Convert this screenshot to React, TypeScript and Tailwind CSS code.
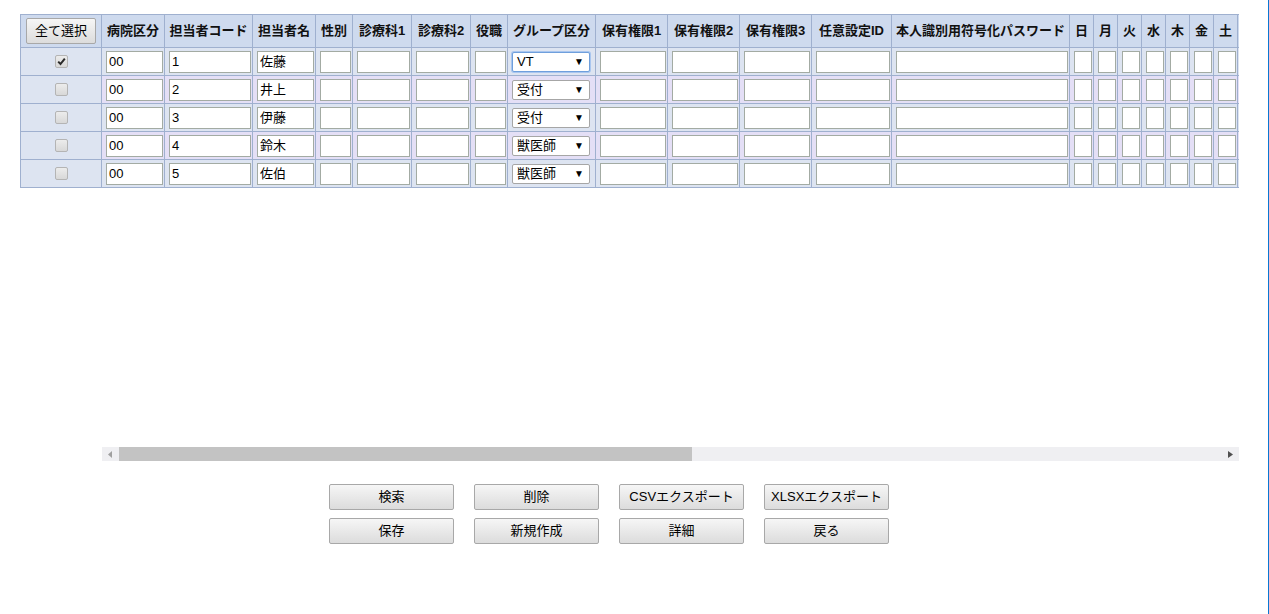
import React from "react";

type Col = { key: string; label: string; w: string; iw: string };

const fieldCols: Col[] = [
  { key: "hosp", label: "病院区分", w: "w-[63px]", iw: "w-[57px]" },
  { key: "code", label: "担当者コード", w: "w-[88px]", iw: "w-[82px]" },
  { key: "name", label: "担当者名", w: "w-[63px]", iw: "w-[57px]" },
  { key: "sex", label: "性別", w: "w-[37px]", iw: "w-[31px]" },
  { key: "d1", label: "診療科1", w: "w-[59px]", iw: "w-[53px]" },
  { key: "d2", label: "診療科2", w: "w-[59px]", iw: "w-[53px]" },
  { key: "role", label: "役職", w: "w-[37px]", iw: "w-[31px]" },
  { key: "group", label: "グループ区分", w: "w-[88px]", iw: "w-[78px]" },
  { key: "p1", label: "保有権限1", w: "w-[72px]", iw: "w-[66px]" },
  { key: "p2", label: "保有権限2", w: "w-[72px]", iw: "w-[66px]" },
  { key: "p3", label: "保有権限3", w: "w-[72px]", iw: "w-[66px]" },
  { key: "any", label: "任意設定ID", w: "w-[80px]", iw: "w-[74px]" },
  { key: "pw", label: "本人識別用符号化パスワード", w: "w-[178px]", iw: "w-[172px]" },
  { key: "sun", label: "日", w: "w-[24px]", iw: "w-[18px]" },
  { key: "mon", label: "月", w: "w-[24px]", iw: "w-[18px]" },
  { key: "tue", label: "火", w: "w-[24px]", iw: "w-[18px]" },
  { key: "wed", label: "水", w: "w-[24px]", iw: "w-[18px]" },
  { key: "thu", label: "木", w: "w-[24px]", iw: "w-[18px]" },
  { key: "fri", label: "金", w: "w-[24px]", iw: "w-[18px]" },
  { key: "sat", label: "土", w: "w-[24px]", iw: "w-[18px]" },
  { key: "x1", label: "", w: "w-[60px]", iw: "w-[54px]" },
  { key: "x2", label: "", w: "w-[60px]", iw: "w-[54px]" },
];

const rows = [
  { checked: true, code: "1", name: "佐藤", group: "VT", focus: true },
  { checked: false, code: "2", name: "井上", group: "受付" },
  { checked: false, code: "3", name: "伊藤", group: "受付" },
  { checked: false, code: "4", name: "鈴木", group: "獣医師" },
  { checked: false, code: "5", name: "佐伯", group: "獣医師" },
];

const font = "font-['Liberation_Sans','Noto_Sans_CJK_JP',sans-serif]";

function CheckBox({ checked }: { checked: boolean }) {
  return (
    <div className="mx-auto w-[13px] h-[13px] rounded-[2px] border border-[#b4b4b4] bg-linear-to-b from-[#ececec] to-[#d8d8d8] flex items-center justify-center">
      {checked && (
        <svg width="9" height="9" viewBox="0 0 9 9">
          <path d="M1.2 4.6 L3.5 7 L7.8 1.6" fill="none" stroke="#2a2a2a" strokeWidth="2" />
        </svg>
      )}
    </div>
  );
}

function Select({ value, focus }: { value: string; focus?: boolean }) {
  return (
    <div
      className={`relative w-[78px] h-[20px] bg-white rounded-[2px] border ${
        focus ? "border-[#6f9fdc] shadow-[0_0_0_1px_#a9c6ef]" : "border-[#a6a6a6]"
      } flex items-center pl-[4px] text-[13px] text-black`}
    >
      <span className="leading-none">{value}</span>
      <span className="absolute right-[5px] top-[4px] text-[10px] leading-none text-black">▼</span>
    </div>
  );
}

function Btn({ children }: { children: React.ReactNode }) {
  return (
    <button className="w-[125px] h-[26px] border border-[#a8a8a8] rounded-[2px] bg-linear-to-b from-[#f6f6f6] to-[#dcdcdc] text-[13px] text-black flex items-center justify-center">
      {children}
    </button>
  );
}

export default function App() {
  return (
    <div className={`w-[1269px] h-[614px] bg-white flex ${font} overflow-hidden`}>
      <div className="w-[1268px] h-full flex flex-col pt-[14px] pl-[20px]">
        <div className="w-[1219px] h-[433px] overflow-hidden">
          <table className="table-fixed border-separate border-spacing-0 border-l border-t border-[#9fb0cf] w-max">
            <colgroup>
              <col className="w-[81px]" />
              {fieldCols.map((c) => (
                <col key={c.key} className={c.w} />
              ))}
            </colgroup>
            <thead>
              <tr>
                <th className="h-[33px] p-0 border-r border-b border-[#9fb0cf] bg-[#cedaee] align-middle">
                  <button className="mx-auto w-[70px] h-[26px] border border-[#a8a8a8] rounded-[2px] bg-linear-to-b from-[#f6f6f6] to-[#dcdcdc] text-[13px] font-normal text-black flex items-center justify-center">
                    全て選択
                  </button>
                </th>
                {fieldCols.map((c) => (
                  <th
                    key={c.key}
                    className="h-[33px] p-0 border-r border-b border-[#9fb0cf] bg-[#cedaee] text-[13px] font-bold text-[#111] text-center whitespace-nowrap align-middle"
                  >
                    {c.label}
                  </th>
                ))}
              </tr>
            </thead>
            <tbody>
              {rows.map((r, i) => {
                const bg = i % 2 === 0 ? "bg-[#dde4f1]" : "bg-[#e4dff6]";
                return (
                  <tr key={i}>
                    <td className="h-[28px] p-0 border-r border-b border-[#9fb0cf] bg-[#dde4f1] align-middle">
                      <CheckBox checked={r.checked} />
                    </td>
                    {fieldCols.map((c) => {
                      let content: React.ReactNode;
                      if (c.key === "group") {
                        content = <Select value={r.group} focus={r.focus} />;
                      } else {
                        const val =
                          c.key === "hosp" ? "00" : c.key === "code" ? r.code : c.key === "name" ? r.name : "";
                        content = (
                          <div
                            className={`${c.iw} h-[22px] bg-white border border-[#a3aba3] pl-[2px] flex items-center text-[13px] text-black leading-none`}
                          >
                            {val}
                          </div>
                        );
                      }
                      return (
                        <td
                          key={c.key}
                          className={`h-[28px] p-0 pl-[4px] border-r border-b border-[#9fb0cf] ${bg} align-middle`}
                        >
                          {content}
                        </td>
                      );
                    })}
                  </tr>
                );
              })}
            </tbody>
          </table>
        </div>
        <div className="ml-[82px] w-[1137px] h-[14px] flex bg-[#efeff2]">
          <div className="w-[17px] h-full flex items-center justify-center">
            <svg width="5" height="7" viewBox="0 0 5 7">
              <path d="M4 0 L0 3.5 L4 7 Z" fill="#a0a0a0" />
            </svg>
          </div>
          <div className="w-[573px] h-full bg-[#c3c3c3]" />
          <div className="flex-1" />
          <div className="w-[17px] h-full flex items-center justify-center">
            <svg width="5" height="7" viewBox="0 0 5 7">
              <path d="M0 0 L5 3.5 L0 7 Z" fill="#505050" />
            </svg>
          </div>
        </div>
        <div className="ml-[309px] mt-[23px] grid grid-cols-[repeat(4,125px)] gap-x-[20px] gap-y-[8px]">
          <Btn>検索</Btn>
          <Btn>削除</Btn>
          <Btn>CSVエクスポート</Btn>
          <Btn>XLSXエクスポート</Btn>
          <Btn>保存</Btn>
          <Btn>新規作成</Btn>
          <Btn>詳細</Btn>
          <Btn>戻る</Btn>
        </div>
      </div>
      <div className="w-px h-full bg-[#0a78d4]" />
    </div>
  );
}
